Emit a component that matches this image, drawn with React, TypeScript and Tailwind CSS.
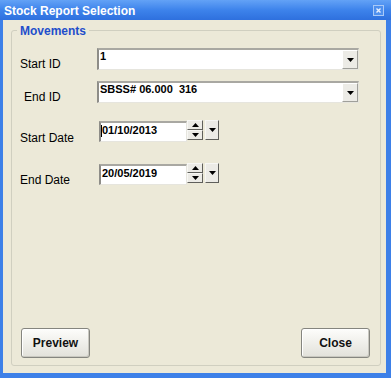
import React from 'react';

const Tri: React.FC<{ up?: boolean; w?: number }> = ({ up, w = 7 }) => (
  <svg width={w} height={4} viewBox={`0 0 ${w} 4`}>
    <polygon points={up ? `0,4 ${w},4 ${w / 2},0` : `0,0 ${w},0 ${w / 2},4`} fill="#000" />
  </svg>
);

const sunken =
  'border-t-2 border-l-2 border-b border-r border-t-[#a9a8a2] border-l-[#8e8d88] border-b-[#e6e5de] border-r-[#e6e5de] bg-white';

const raised =
  'flex items-center justify-center bg-[#ecebe6] border border-t-white border-l-white border-r-[#9f9f9a] border-b-[#9f9f9a]';

const spin =
  'flex items-center justify-center bg-[#ecebe6] border border-t-[#f7f7f4] border-l-[#f7f7f4] border-r-[#5f5f5b] border-b-[#5f5f5b]';

const Combo: React.FC<{ value: string }> = ({ value }) => (
  <div className={`flex h-[22px] w-[262px] ${sunken}`}>
    <span className="flex-1 pl-[1px] text-[11px] leading-[13px] font-bold whitespace-pre">{value}</span>
    <span className={`w-[16px] ${raised}`}>
      <Tri />
    </span>
  </div>
);

const DateField: React.FC<{ value: string; caret?: boolean }> = ({ value, caret }) => (
  <div className="flex items-start h-[21px]">
    <div className={`relative w-[88px] h-[21px] ${sunken}`}>
      <span className="block pl-[1px] pt-[1px] text-[11px] leading-[13px] font-bold">{value}</span>
      {caret && <span className="absolute left-0 top-[2px] w-[1px] h-[12px] bg-black" />}
    </div>
    <div className="flex flex-col w-[16px] h-[20px] mt-[-1px]">
      <span className={`h-[10px] ${spin}`}>
        <Tri up />
      </span>
      <span className={`h-[10px] ${spin}`}>
        <Tri />
      </span>
    </div>
    <span className={`ml-[2px] w-[14px] h-[20px] mt-[-1px] ${spin}`}>
      <Tri />
    </span>
  </div>
);

const Button: React.FC<{ label: string }> = ({ label }) => (
  <button className="w-[69px] h-[30px] rounded-[3px] border border-[#85857f] bg-linear-to-b from-[#fdfdfb] to-[#e2e1da] shadow-[inset_1px_1px_0_#ffffff,inset_-1px_-1px_0_#c9c8c0] text-[12px] font-bold text-[#111]">
    {label}
  </button>
);

export default function App() {
  return (
    <div className="w-[391px] h-[378px] flex flex-col overflow-hidden font-['Liberation_Sans',Arial,sans-serif] text-black">
      {/* Title bar */}
      <div className="h-[20px] flex items-center justify-between pl-[4px] pr-[7px] bg-linear-to-b from-[#63a2f6] via-[#3d83eb] to-[#2e70de]">
        <span className="pt-[2px] text-[12px] leading-[14px] font-bold text-white">Stock Report Selection</span>
        <span className="w-[11px] h-[11px] flex items-center justify-center border border-[#a9c9f7] bg-[#4f90ee]">
          <svg width="5" height="5" viewBox="0 0 5 5">
            <path d="M0.5 0.5 L4.5 4.5 M4.5 0.5 L0.5 4.5" stroke="#e8f0ff" strokeWidth="1.4" />
          </svg>
        </span>
      </div>

      {/* Body */}
      <div className="flex-1 bg-[#ece9d8] border-l-[3px] border-r-[5px] border-b-[5px] border-[#3d80e8] pl-[8px] pr-[5px] pt-[4px]">
        <fieldset className="h-[342px] border border-[#d0cfc0] rounded-[3px]">
          <legend className="ml-[5px] px-[3px] pt-[1px] text-[12px] leading-[12px] font-bold text-[#1f4ecb]">Movements</legend>
          <div className="h-[328px] flex flex-col">
            <div className="flex items-start mt-[11px] pl-[8px]">
              <span className="w-[77px] mt-[9px] text-[12px] leading-[14px]">Start ID</span>
              <Combo value="1" />
            </div>
            <div className="flex items-start mt-[10px] pl-[8px]">
              <span className="w-[77px] mt-[9px] pl-[4px] text-[12px] leading-[14px]">End ID</span>
              <Combo value="SBSS# 06.000  316" />
            </div>
            <div className="flex items-start mt-[17px] pl-[8px]">
              <span className="w-[79px] mt-[10px] text-[12px] leading-[14px]">Start Date</span>
              <DateField value="01/10/2013" caret />
            </div>
            <div className="flex items-start mt-[19px] pl-[8px]">
              <span className="w-[79px] mt-[9px] text-[12px] leading-[14px]">End Date</span>
              <DateField value="20/05/2019" />
            </div>
            <div className="mt-auto flex justify-between pl-[9px] pr-[10px] pb-[7px]">
              <Button label="Preview" />
              <Button label="Close" />
            </div>
          </div>
        </fieldset>
      </div>
    </div>
  );
}
